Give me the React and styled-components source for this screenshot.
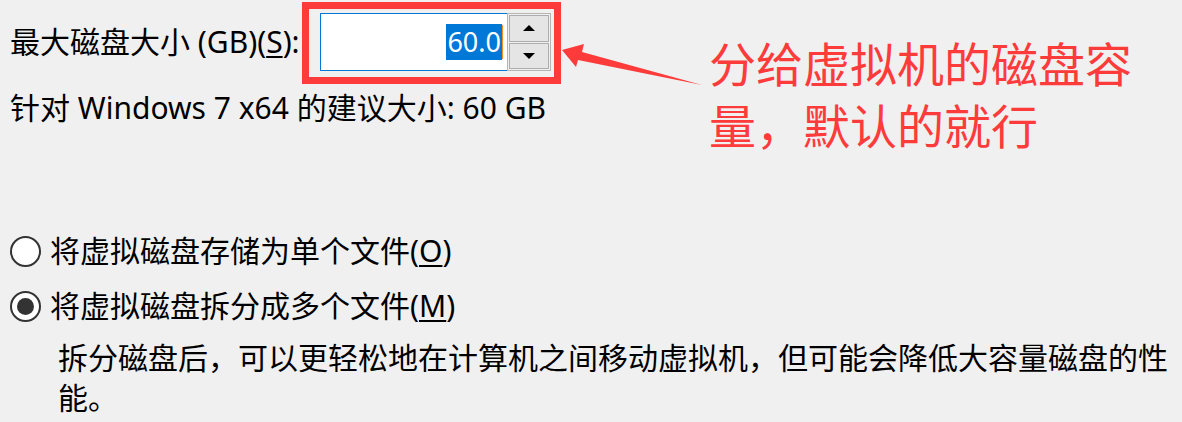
import React from "react"
import styled, { createGlobalStyle } from "styled-components"

const GlobalStyle = createGlobalStyle`
  html, body {
    margin: 0;
    padding: 0;
    background: #f0f0f0;
  }
`

const UI_FONT = `"Noto Sans", "Noto Sans CJK SC", sans-serif`

export default function App() {
  return (
    <>
      <GlobalStyle />
      <Page>
        <SizeRow>
          <Label>
            最大磁盘大小 (GB)(<u>S</u>):
          </Label>
          <SpinBox>
            <SpinInput>
              <Selected>60.0</Selected>
              <Caret />
            </SpinInput>
            <SpinButtons>
              <SpinButton>
                <Triangle up />
              </SpinButton>
              <SpinButton>
                <Triangle />
              </SpinButton>
            </SpinButtons>
            <Highlight />
          </SpinBox>
        </SizeRow>

        <Hint>针对 Windows 7 x64 的建议大小: 60 GB</Hint>

        <RadioGroup>
          <RadioRow>
            <Radio />
            <RadioText>
              将虚拟磁盘存储为单个文件(<u>O</u>)
            </RadioText>
          </RadioRow>
          <RadioRow>
            <Radio checked />
            <RadioText>
              将虚拟磁盘拆分成多个文件(<u>M</u>)
            </RadioText>
          </RadioRow>
        </RadioGroup>

        <Description>
          拆分磁盘后，可以更轻松地在计算机之间移动虚拟机，但可能会降低大容量磁盘的性
          <br />
          能。
        </Description>

        <Arrow viewBox="0 0 1182 422">
          <polygon points="562,50 584,44 582,52 702,85 578,60 576,67" fill="#fd3b3b" />
        </Arrow>
        <Note>
          分给虚拟机的磁盘容
          <br />
          量，默认的就行
        </Note>
      </Page>
    </>
  )
}

const Page = styled.div`
position: relative;
width: 1182px;
height: 422px;
box-sizing: border-box;
padding: 13px 0 0 10px;
overflow: hidden;
font-family: ${UI_FONT};
color: #000;
`

const SizeRow = styled.div`
display: flex;
align-items: center;
height: 58px;
`

const Label = styled.div`
width: 310px;
font-size: 30px;
line-height: 36px;
white-space: nowrap;
u {
    text-underline-offset: 3px;
    text-decoration-thickness: 2px;
}
`

const SpinBox = styled.div`
position: relative;
display: flex;
height: 58px;
`

const SpinInput = styled.div`
display: flex;
align-items: center;
justify-content: flex-end;
box-sizing: border-box;
width: 187px;
height: 58px;
padding-right: 4px;
background: #fff;
border: 1px solid #0078d7;
border-right: none;
`

const Selected = styled.span`
font-size: 27px;
line-height: 36px;
background: #0078d7;
color: #fff;
padding: 0 1px;
`

const Caret = styled.span`
width: 1px;
height: 34px;
background: #ff8c1a;
`

const SpinButtons = styled.div`
display: flex;
flex-direction: column;
box-sizing: border-box;
width: 44px;
height: 58px;
padding: 1px;
gap: 1px;
border: 1px solid #b4b4b4;
background: #f0f0f0;
`

const SpinButton = styled.div`
flex: 1;
display: flex;
align-items: center;
justify-content: center;
background: #e5e5e5;
border: 1px solid #adadad;
`

const Triangle = styled.span`
width: 0;
height: 0;
border-left: 6px solid transparent;
border-right: 6px solid transparent;
${(p) => (p.up ? "border-bottom: 6px solid #000;" : "border-top: 6px solid #000;")}
`

const Highlight = styled.div`
position: absolute;
left: -18px;
top: -11px;
width: 259px;
height: 82px;
box-sizing: border-box;
border: 7px solid #fd3b3b;
pointer-events: none;
`

const Hint = styled.div`
margin-top: 19px;
font-size: 30px;
line-height: 36px;
white-space: nowrap;
`

const RadioGroup = styled.div`
display: flex;
flex-direction: column;
gap: 15px;
margin-top: 105px;
`

const RadioRow = styled.div`
display: flex;
align-items: center;
gap: 9px;
height: 40px;
`

const Radio = styled.span`
display: flex;
align-items: center;
justify-content: center;
box-sizing: border-box;
width: 31px;
height: 31px;
border-radius: 50%;
border: 2px solid #333;
background: #fff;
&::after {
    content: "";
    width: 17px;
    height: 17px;
    border-radius: 50%;
    background: #333;
    display: ${(p) => (p.checked ? "block" : "none")};
}
`

const RadioText = styled.span`
font-size: 30px;
line-height: 40px;
white-space: nowrap;
u {
    text-underline-offset: 3px;
    text-decoration-thickness: 2px;
}
`

const Description = styled.div`
margin: 12px 0 0 48px;
font-size: 30px;
line-height: 40px;
white-space: nowrap;
`

const Arrow = styled.svg`
position: absolute;
left: 0;
top: 0;
width: 1182px;
height: 422px;
pointer-events: none;
`

const Note = styled.div`
position: absolute;
left: 709px;
top: 33px;
font-size: 47px;
line-height: 62px;
color: #fd3b3b;
white-space: nowrap;
`
